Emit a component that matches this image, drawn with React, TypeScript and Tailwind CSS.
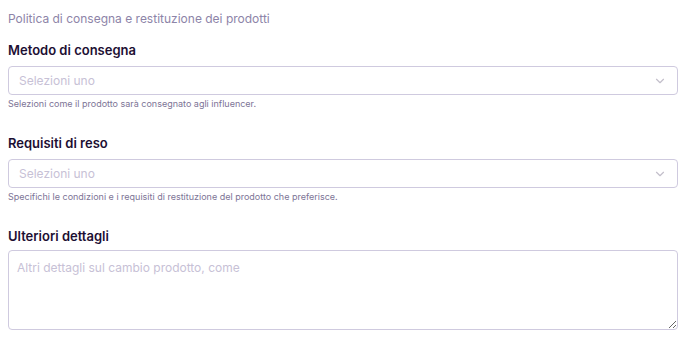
import { ChevronDown } from "lucide-react";

const font = { fontFamily: "Inter, 'Noto Sans', sans-serif" };

function SelectField({
  label,
  hint,
}: {
  label: string;
  hint: string;
}) {
  return (
    <div className="flex flex-col">
      <label className="text-[13px] font-semibold leading-4 text-[#1d0f33] mb-[8px]">
        {label}
      </label>
      <div className="h-[29px] w-full rounded-[4px] border border-[#cfcadf] bg-white flex items-center justify-between pl-[10px] pr-[10px]">
        <span className="text-[12px] text-[#c7c1d6]">Selezioni uno</span>
        <ChevronDown size={14} strokeWidth={2} className="text-[#c3bfcb]" />
      </div>
      <p className="mt-[3px] text-[9px] leading-3 text-[#7d7496]">{hint}</p>
    </div>
  );
}

export default function App() {
  return (
    <div className="w-[688px] h-[346px] bg-white px-[8px] pt-[11px]" style={font}>
      <p className="text-[12px] leading-4 text-[#8d84a8] mb-[15px]">
        Politica di consegna e restituzione dei prodotti
      </p>
      <div className="flex flex-col gap-[25px] pr-[2px]">
        <SelectField
          label="Metodo di consegna"
          hint="Selezioni come il prodotto sarà consegnato agli influencer."
        />
        <SelectField
          label="Requisiti di reso"
          hint="Specifichi le condizioni e i requisiti di restituzione del prodotto che preferisce."
        />
        <div className="flex flex-col">
          <label className="text-[13px] font-semibold leading-4 text-[#1d0f33] mb-[6px]">
            Ulteriori dettagli
          </label>
          <textarea
            className="h-[80px] w-full rounded-[4px] border border-[#cfcadf] bg-white px-[8px] py-[8px] text-[12px] text-[#1d0f33] placeholder:text-[#c7c1d6] outline-none"
            placeholder="Altri dettagli sul cambio prodotto, come"
          />
        </div>
      </div>
    </div>
  );
}
